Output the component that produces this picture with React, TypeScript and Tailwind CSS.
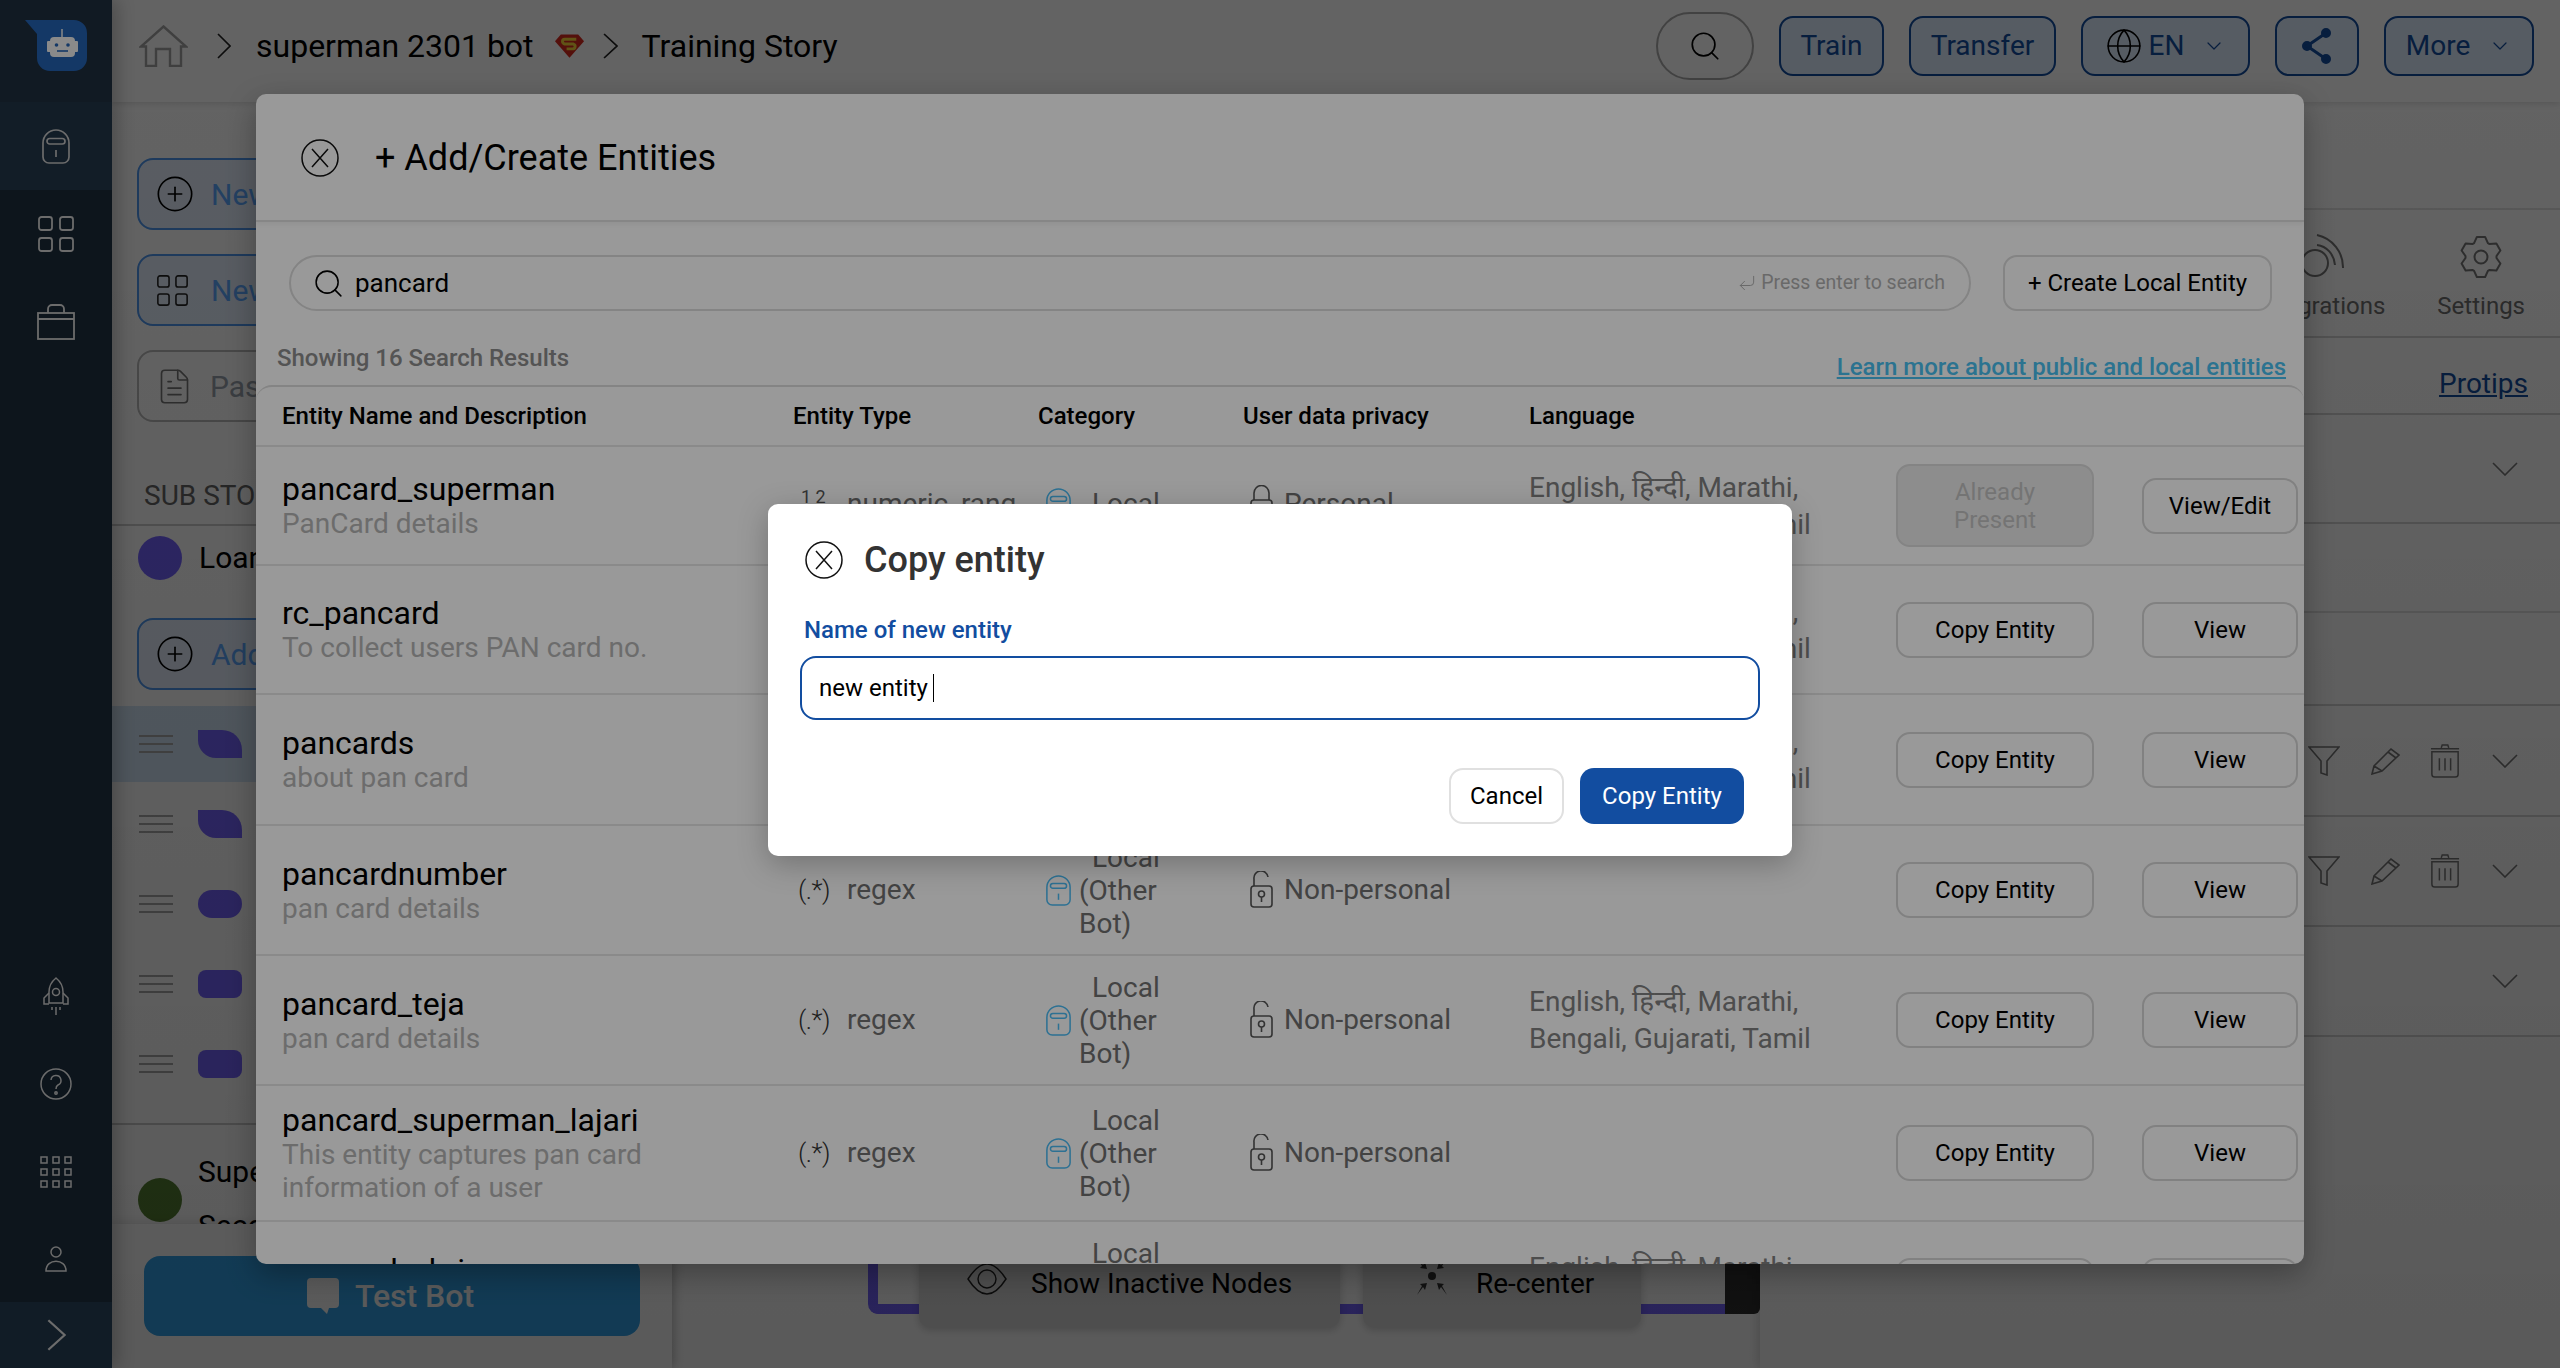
import React from "react";
import { ChevronDown, Search, Globe, CirclePlus, FileText, CornerDownLeft } from "lucide-react";

const Capsule = ({ className = "", w = 25, h = 31 }: { className?: string; w?: number; h?: number }) => (
  <svg width={w} height={h} viewBox="0 0 28 35" preserveAspectRatio="none" fill="none" stroke="currentColor" strokeWidth="1.7" className={className}>
    <path d="M1 14a13 13 0 0 1 26 0v14a6 6 0 0 1-6 6H7a6 6 0 0 1-6-6z" />
    <rect x="5" y="9.5" width="18" height="5.5" rx="2.7" />
    <path d="M14 21v7" />
  </svg>
);

const Squares = ({ size = 36 }: { size?: number }) => (
  <svg width={size} height={size} viewBox="0 0 36 36" fill="none" stroke="currentColor" strokeWidth="1.8">
    <rect x="1" y="1" width="13" height="13" rx="2.5" />
    <rect x="22" y="1" width="13" height="13" rx="2.5" />
    <rect x="1" y="22" width="13" height="13" rx="2.5" />
    <rect x="22" y="22" width="13" height="13" rx="2.5" />
  </svg>
);

const Grid9 = () => (
  <svg width="32" height="32" viewBox="0 0 32 32" fill="none" stroke="currentColor" strokeWidth="1.5">
    {[1, 13, 25].map((y) => [1, 13, 25].map((x) => <rect key={`${x}-${y}`} x={x} y={y} width="6" height="6" />))}
  </svg>
);

const CloseCircle = ({ size = 38 }: { size?: number }) => (
  <svg width={size} height={size} viewBox="0 0 38 38" fill="none" stroke="#111" strokeWidth="1.5" className="shrink-0">
    <circle cx="19" cy="19" r="18" />
    <path d="M11 10l16 18M27 10L11 28" />
  </svg>
);

const ChevR = ({ w = 14, h = 26, color = "#222" }: { w?: number; h?: number; color?: string }) => (
  <svg width={w} height={h} viewBox="0 0 14 26" preserveAspectRatio="none" fill="none" stroke={color} strokeWidth="1.6" className="shrink-0">
    <path d="M1 1l12 12L1 25" />
  </svg>
);

const ChevD = () => (
  <svg width="26" height="14" viewBox="0 0 26 14" fill="none" stroke="#777" strokeWidth="1.6" className="shrink-0">
    <path d="M1 1l12 12L25 1" />
  </svg>
);

const Lock = ({ closed }: { closed?: boolean }) => (
  <svg width="26" height="38" viewBox="0 0 26 38" fill="none" stroke="currentColor" strokeWidth="1.6" className="shrink-0">
    <path d={closed ? "M5 15V8a7.5 7.5 0 0 1 15 0v7" : "M5 15V8a7 7 0 0 1 14-2"} />
    <rect x="2" y="15" width="21" height="21" rx="3" />
    <circle cx="12.5" cy="23" r="3" />
    <path d="M12.5 26v5" />
  </svg>
);

const Trash = () => (
  <svg width="30" height="34" viewBox="0 0 32 36" fill="none" stroke="#777" strokeWidth="1.6" className="shrink-0">
    <path d="M1 5h30M12 4l1-3h6l1 3M2 8h28v24a3 3 0 0 1-3 3H5a3 3 0 0 1-3-3z" />
    <path d="M10 15v13M16 15v13M22 15v13" />
  </svg>
);

const FunnelIcon = () => (
  <svg width="32" height="30" viewBox="0 0 32 30" fill="none" stroke="#777" strokeWidth="1.6" className="shrink-0">
    <path d="M1 1h30L19 15v14l-6-2V15z" />
  </svg>
);

const PencilIcon = () => (
  <svg width="29" height="28" viewBox="0 0 29 28" fill="none" stroke="#777" strokeWidth="1.6" className="shrink-0">
    <path d="M1 27l2-8L20 2l8 6-17 16zM3 19l8 5M17 5l8 6" />
  </svg>
);

const HomeIcon = () => (
  <svg width="49" height="42" viewBox="0 0 49 42" fill="none" stroke="#a4a4a4" strokeWidth="2.4" className="shrink-0">
    <path d="M24.5 1.5L47 21.5h-5V41H31V24H17v17H7V21.5H2z" />
  </svg>
);

const gearPath = (() => {
  const pts: string[] = [];
  const cx = 22;
  const cy = 22;
  for (let i = 0; i < 6; i++) {
    const a = (i * Math.PI) / 3 - Math.PI / 2;
    const p = (r: number, d: number) => `${(cx + r * Math.cos(a + d)).toFixed(1)} ${(cy + r * Math.sin(a + d)).toFixed(1)}`;
    pts.push(p(15.5, -0.46), p(20.5, -0.2), p(20.5, 0.2), p(15.5, 0.46));
  }
  return `M${pts.join("L")}Z`;
})();

const GearIcon = () => (
  <svg width="44" height="46" viewBox="0 0 44 44" fill="none" stroke="#777" strokeWidth="2" strokeLinejoin="round">
    <path d={gearPath} />
    <circle cx="22" cy="22" r="6.5" />
  </svg>
);

const DragLines = () => (
  <svg width="34" height="18" viewBox="0 0 34 18" fill="none" stroke="#aaaaaa" strokeWidth="2" className="shrink-0">
    <path d="M0 1h34M0 9h34M0 17h34" />
  </svg>
);

const Logo = () => (
  <svg width="62" height="51" viewBox="0 0 62 51">
    <path d="M0 0h49a13 13 0 0 1 13 13v25a13 13 0 0 1-13 13H25a13 13 0 0 1-13-13V14z" fill="#143866" />
    <path d="M37 9v9" stroke="#8a8a8a" strokeWidth="1.5" />
    <rect x="25" y="17" width="25" height="20" rx="4" fill="#8a8a8a" />
    <rect x="22" y="21" width="4" height="11" rx="1" fill="#8a8a8a" />
    <rect x="49" y="21" width="4" height="11" rx="1" fill="#8a8a8a" />
    <circle cx="31.5" cy="25" r="1.8" fill="#143866" />
    <circle cx="43" cy="25" r="1.8" fill="#143866" />
    <path d="M32 31h11" stroke="#143866" strokeWidth="1.6" />
  </svg>
);

const Rocket = () => (
  <svg width="28" height="40" viewBox="0 0 28 40" fill="none" stroke="currentColor" strokeWidth="1.5">
    <path d="M14 1c5 4 7 9 7 14v11H7V15c0-5 2-10 7-14z" />
    <circle cx="14" cy="15" r="3.5" />
    <path d="M7 16l-5 5v6h5M21 16l5 5v6h-5M10 30v3M14 30v8M18 30v3" />
  </svg>
);

const Superman = () => (
  <svg width="31" height="26" viewBox="0 0 32 26" className="shrink-0">
    <path d="M7 1h18l6 7-15 17L1 8z" fill="#d92b1f" />
    <path d="M23 6H11c-3 0-3 4 0 5h9c3 1 2 5-1 5h-6" fill="none" stroke="#f8d73a" strokeWidth="3" />
  </svg>
);

const TopBtn = ({ children, className = "" }: { children: React.ReactNode; className?: string }) => (
  <div className={`flex h-[60px] items-center justify-center rounded-[14px] border-2 border-[#124da0] bg-[#deecff] text-[28px] text-[#124da0] ${className}`}>{children}</div>
);

const SideBtn = ({ icon, label, muted }: { icon: React.ReactNode; label: string; muted?: boolean }) => (
  <div className={`flex h-[72px] w-[504px] items-center gap-[16px] rounded-[16px] border-2 pl-[16px] text-[30px] ${muted ? "border-[#bbbbbb] bg-white text-[#9aa3ad]" : "border-[#4f98f0] bg-[#e6f0ff] text-[#5ca8ff]"}`}>
    {icon}
    <span>{label}</span>
  </div>
);

const DragRow = ({ shape, active }: { shape: string; active?: boolean }) => (
  <div className="flex h-[80px] shrink-0 items-center">
    <div className={`flex h-[76px] w-full items-center gap-[25px] pl-[27px] ${active ? "bg-[#d4e6f8]" : ""}`}>
      <DragLines />
      <div className={`h-[28px] w-[44px] bg-[#7564ff] ${shape}`} />
    </div>
  </div>
);

const RightRow = ({ h, icons }: { h: string; icons?: boolean }) => (
  <div className={`flex items-center justify-end border-b-2 border-[#d4d4d4] pr-[42px] ${h}`}>
    {icons && (
      <>
        <FunnelIcon />
        <span className="ml-[31px] flex"><PencilIcon /></span>
        <span className="ml-[30px] flex"><Trash /></span>
      </>
    )}
    <span className="ml-[32px] flex"><ChevD /></span>
  </div>
);

type Row = {
  name: string;
  desc: string[];
  h: string;
  numeric?: boolean;
  short?: boolean;
  personal?: boolean;
  lang?: boolean;
  already?: boolean;
};

const rows: Row[] = [
  { name: "pancard_superman", desc: ["PanCard details"], h: "h-[119px]", numeric: true, short: true, personal: true, lang: true, already: true },
  { name: "rc_pancard", desc: ["To collect users PAN card no."], h: "h-[129px]", lang: true },
  { name: "pancards", desc: ["about pan card"], h: "h-[131px]", lang: true },
  { name: "pancardnumber", desc: ["pan card details"], h: "h-[130px]" },
  { name: "pancard_teja", desc: ["pan card details"], h: "h-[130px]", lang: true },
  { name: "pancard_superman_lajari", desc: ["This entity captures pan card", "information of a user"], h: "h-[136px]" },
  { name: "pancard_shriram", desc: ["pan card details"], h: "h-[130px]", lang: true },
];

const EntityRow = ({ r }: { r: Row }) => (
  <div className={`flex shrink-0 items-center border-b-2 border-[#e6e6e6] ${r.h}`}>
    <div className="w-[537px] shrink-0 pl-[26px]">
      <div className="text-[32px] leading-[36px] text-black">{r.name}</div>
      {r.desc.map((d) => (
        <div key={d} className="text-[28px] leading-[33px] text-[#b5b5b5]">{d}</div>
      ))}
    </div>
    <div className={`flex w-[245px] shrink-0 items-center text-[28px] text-[#707070] ${r.short ? "mb-[4px]" : ""}`}>
      {r.numeric ? (
        <span className="w-[54px] pb-[14px] pl-[8px] text-[18px] leading-[20px] text-[#555]">1 2</span>
      ) : (
        <span className="w-[54px] pl-[5px] text-[26px] font-light tracking-[-0.5px] text-[#333]">(.*)</span>
      )}
      <span>{r.numeric ? "numeric_rang" : "regex"}</span>
    </div>
    <div className={`flex w-[205px] shrink-0 items-center text-[28px] leading-[33px] text-[#707070] ${r.short ? "mb-[4px]" : ""}`}>
      <Capsule className="ml-[8px] shrink-0 text-[#4bbcf5]" />
      <div className="ml-[8px] w-[110px] indent-[13px]">{r.short ? "Local" : "Local (Other Bot)"}</div>
    </div>
    <div className={`flex w-[286px] shrink-0 items-center gap-[9px] text-[28px] text-[#707070] ${r.short ? "mb-[4px]" : ""}`}>
      <span className="ml-[6px] flex text-[#555]"><Lock closed={r.personal} /></span>
      <span>{r.personal ? "Personal" : "Non-personal"}</span>
    </div>
    <div className="w-[367px] shrink-0 text-[28px] leading-[37px] text-[#808080]">
      {r.lang && (
        <>
          <div>English, हिन्दी, Marathi,</div>
          <div>Bengali, Gujarati, Tamil</div>
        </>
      )}
    </div>
    <div className="flex items-center gap-[48px] text-[24px]">
      {r.already ? (
        <div className="flex h-[83px] w-[198px] items-center justify-center rounded-[14px] border-2 border-[#dcdcdc] bg-[#ececec] text-center leading-[28px] text-[#c2c2c2]">
          Already<br />Present
        </div>
      ) : (
        <div className="flex h-[56px] w-[198px] items-center justify-center rounded-[14px] border-2 border-[#d8d8d8] text-black">Copy Entity</div>
      )}
      <div className="flex h-[56px] w-[156px] items-center justify-center rounded-[14px] border-2 border-[#d8d8d8] text-black">
        {r.already ? "View/Edit" : "View"}
      </div>
    </div>
  </div>
);

export default function App() {
  return (
    <div className="relative flex h-[1368px] w-[2560px] overflow-hidden bg-white font-['Roboto','Noto_Sans',sans-serif] text-black">
      {/* Sidebar */}
      <aside className="relative z-40 flex h-full w-[112px] shrink-0 flex-col items-center bg-[#0d151c] text-[#6c6c6c] shadow-[6px_0_16px_rgba(0,0,0,0.22)]">
        <div className="flex h-[102px] w-full shrink-0 items-start justify-center bg-[#111a23] pt-[20px]"><Logo /></div>
        <div className="flex h-[88px] w-full shrink-0 items-center justify-center bg-[#121d27]"><Capsule w={28} h={35} /></div>
        <div className="mt-[26px]"><Squares /></div>
        <div className="mt-[52px]">
          <svg width="38" height="36" viewBox="0 0 38 36" fill="none" stroke="currentColor" strokeWidth="1.8">
            <rect x="1" y="9" width="36" height="26" />
            <path d="M1 15h36M11 9V5a4 4 0 0 1 4-4h8a4 4 0 0 1 4 4v4" />
          </svg>
        </div>
        <div className="mt-[637px]"><Rocket /></div>
        <div className="mt-[51px] flex"><svg width="32" height="32" viewBox="0 0 32 32" fill="none" stroke="currentColor" strokeWidth="1.5"><circle cx="16" cy="16" r="15" /><path d="M11 12a5 5 0 1 1 7 5c-2 1-2 2-2 4" /><circle cx="16" cy="25" r="1.2" /></svg></div>
        <div className="mt-[56px] flex"><Grid9 /></div>
        <div className="mt-[58px] flex"><svg width="24" height="26" viewBox="0 0 24 26" fill="none" stroke="currentColor" strokeWidth="1.5"><circle cx="12" cy="6" r="5" /><path d="M2 25c0-13 20-13 20 0z" /></svg></div>
        <div className="mt-[30px] flex w-full flex-1 items-center justify-center bg-[#111c26]"><ChevR w={19} h={32} color="#6c6c6c" /></div>
      </aside>

      <div className="flex min-w-0 flex-1 flex-col">
        {/* Top bar */}
        <header className="z-10 flex h-[102px] shrink-0 items-center bg-white pb-[10px] pl-[27px] pr-[26px] shadow-[0_2px_6px_rgba(0,0,0,0.12)]">
          <HomeIcon />
          <span className="ml-[29px] flex"><ChevR /></span>
          <span className="ml-[25px] text-[32px] text-black">superman 2301 bot</span>
          <span className="ml-[20px] flex"><Superman /></span>
          <span className="ml-[18px] flex"><ChevR w={15} /></span>
          <span className="ml-[24px] text-[32px] text-black">Training Story</span>
          <div className="ml-auto flex items-center gap-[25px]">
            <div className="flex h-[68px] w-[98px] items-center justify-center rounded-full border-2 border-[#aaaaaa]"><Search size={34} strokeWidth={1.2} /></div>
            <TopBtn className="w-[105px]">Train</TopBtn>
            <TopBtn className="w-[147px]">Transfer</TopBtn>
            <TopBtn className="w-[169px] gap-[6px]"><Globe size={38} strokeWidth={1} className="text-black" />EN<ChevronDown size={24} strokeWidth={1.2} className="ml-[12px]" /></TopBtn>
            <TopBtn className="w-[84px]">
              <svg width="30" height="36" viewBox="0 0 30 36" fill="#124da0" stroke="#124da0" strokeWidth="3"><circle cx="24" cy="5" r="3.5" /><circle cx="5" cy="18" r="3.5" /><circle cx="24" cy="31" r="3.5" /><path d="M24 5L5 18l19 13" fill="none" /></svg>
            </TopBtn>
            <TopBtn className="w-[150px] gap-[18px]">More<ChevronDown size={24} strokeWidth={1.2} /></TopBtn>
          </div>
        </header>

        <div className="flex min-h-0 flex-1">
          {/* Left story panel */}
          <section className="relative z-[5] flex w-[560px] shrink-0 flex-col shadow-[3px_0_10px_rgba(0,0,0,0.18)]">
            <div className="flex flex-col gap-[24px] pl-[25px] pt-[56px]">
              <SideBtn icon={<CirclePlus size={40} strokeWidth={1} className="text-black" />} label="New Story" />
              <SideBtn icon={<span className="ml-[2px] mr-[7px] flex text-[#222]"><Squares size={31} /></span>} label="New Flow" />
              <SideBtn icon={<FileText size={39} strokeWidth={1} className="text-[#777]" />} label="Paste" muted />
            </div>
            <div className="mt-[60px] h-[44px] border-b-2 border-[#cccccc] pl-[32px] text-[28px] leading-[28px] text-[#666]">SUB STORIES</div>
            <div className="mt-[9px] flex items-center gap-[17px] pl-[26px] text-[30px]">
              <div className="h-[44px] w-[44px] rounded-full bg-[#7564ff]" />
              <span>Loan</span>
            </div>
            <div className="mt-[38px] pl-[25px]">
              <SideBtn icon={<CirclePlus size={40} strokeWidth={1} className="text-black" />} label="Add" />
            </div>
            <div className="mt-[14px] flex flex-col border-b-2 border-[#cccccc] pb-[19px]">
              <DragRow active shape="rounded-tr-[20px] rounded-bl-[18px]" />
              <DragRow shape="rounded-tr-[20px] rounded-bl-[18px]" />
              <DragRow shape="rounded-full" />
              <DragRow shape="rounded-[8px]" />
              <DragRow shape="rounded-[8px]" />
            </div>
            <div className="flex flex-1 items-start gap-[16px] overflow-hidden pl-[26px] pt-[30px] text-[30px]">
              <div className="mt-[23px] h-[44px] w-[44px] shrink-0 rounded-full bg-[#568032]" />
              <div className="flex flex-col gap-[20px] leading-[34px]"><span>Super</span><span>Second</span></div>
            </div>
            <div className="flex h-[144px] shrink-0 items-start bg-white pl-[32px] pt-[32px] shadow-[0_-3px_8px_rgba(0,0,0,0.1)]">
              <div className="flex h-[80px] w-[496px] items-center justify-center gap-[16px] rounded-[16px] bg-[#33a5ec] text-[32px] font-medium text-white">
                <svg width="32" height="36" viewBox="0 0 32 36" fill="currentColor" className="-ml-[3px]"><path d="M4 0h24a4 4 0 0 1 4 4v22a4 4 0 0 1-4 4h-6l-2 6-6-6H4a4 4 0 0 1-4-4V4a4 4 0 0 1 4-4z" /></svg>
                Test Bot
              </div>
            </div>
          </section>

          {/* Canvas */}
          <section className="relative min-w-0 flex-1">
            <div className="absolute left-[196px] top-[1100px] h-[112px] w-[892px] rounded-b-[10px] border-b-[10px] border-l-[10px] border-[#7564ff]" />
            <div className="absolute left-[1053px] top-[1100px] h-[112px] w-[35px] rounded-br-[6px] bg-[#303030]" />
            <div className="absolute left-[247px] top-[1120px] flex h-[105px] w-[421px] items-start gap-[24px] rounded-[10px] bg-[#dcdcdc] pl-[48px] pt-[41px] text-[28px] shadow-[0_3px_8px_rgba(0,0,0,0.2)]">
              <svg width="40" height="32" viewBox="0 0 40 32" fill="none" stroke="#222" strokeWidth="1.4"><path d="M1 16C8 5 14 1 20 1s12 4 19 15c-7 11-13 15-19 15S8 27 1 16z" /><circle cx="20" cy="16" r="9" /></svg>
              Show Inactive Nodes
            </div>
            <div className="absolute left-[691px] top-[1120px] flex h-[105px] w-[278px] items-start gap-[23px] rounded-[10px] bg-[#dcdcdc] pl-[48px] pt-[41px] text-[28px] shadow-[0_3px_8px_rgba(0,0,0,0.2)]">
              <svg width="42" height="38" viewBox="0 0 42 38" fill="#333" className="-mt-[6px]"><circle cx="21" cy="19" r="4" /><path d="M6 0l6 8 2-3 2 7-7-1 2-2zM36 0l-6 8-2-3-2 7 7-1-2-2zM6 38l6-8 2 3 2-7-7 1 2 2zM36 38l-6-8-2 3-2-7 7 1-2 2z" /></svg>
              Re-center
            </div>
          </section>

          {/* Right panel */}
          <section className="z-[5] flex w-[800px] shrink-0 flex-col shadow-[-3px_0_10px_rgba(0,0,0,0.15)]">
            <div className="h-[108px] border-b-2 border-[#e4e4e4]" />
            <div className="flex h-[128px] items-center justify-end gap-[52px] border-b-2 border-[#d4d4d4] pr-[35px] pt-[12px] text-[24px] text-[#707070]">
              <div className="flex flex-col items-center gap-[8px]">
                <svg width="60" height="46" viewBox="0 0 60 46" fill="none" stroke="#777" strokeWidth="2"><circle cx="23" cy="29" r="13" /><path d="M25 1a33 33 0 0 1 26 33M25 11a20 22 0 0 1 18 20" /></svg>
                <span>Integrations</span>
              </div>
              <div className="flex flex-col items-center gap-[8px]">
                <GearIcon />
                <span>Settings</span>
              </div>
            </div>
            <div className="flex h-[77px] items-center justify-end border-b-2 border-[#d4d4d4] pr-[32px] pt-[16px] text-[28px] text-[#124da0] underline">Protips</div>
            <RightRow h="h-[109px]" />
            <div className="h-[89px] border-b-2 border-[#e0e0e0]" />
            <div className="h-[93px] border-b-2 border-[#d4d4d4]" />
            <RightRow h="h-[111px]" icons />
            <RightRow h="h-[110px]" icons />
            <RightRow h="h-[110px]" />
          </section>
        </div>
      </div>

      {/* First dialog */}
      <div className="absolute inset-0 z-20 flex justify-center bg-gradient-to-b from-black/35 to-black/41 pt-[94px]">
        <div className="flex h-[1170px] w-[2048px] flex-col overflow-hidden rounded-[10px] bg-white shadow-[0_10px_30px_rgba(0,0,0,0.3)]">
          <div className="flex h-[128px] shrink-0 items-center gap-[36px] border-b-2 border-[#e0e0e0] pl-[45px] pt-[2px] shadow-[0_2px_5px_rgba(0,0,0,0.06)]">
            <CloseCircle />
            <span className="text-[36px] text-black">+ Add/Create Entities</span>
          </div>
          <div className="mt-[33px] flex shrink-0 items-center pl-[33px]">
            <div className="flex h-[56px] w-[1682px] items-center rounded-full border-2 border-[#dcdcdc] pl-[22px] pr-[24px]">
              <Search size={33} strokeWidth={1.1} className="-ml-[1px] text-black" />
              <span className="ml-[10px] text-[26px] text-black">pancard</span>
              <span className="ml-auto flex items-center gap-[4px] text-[19.5px] text-[#b0b0b0]"><CornerDownLeft size={20} strokeWidth={1.2} />Press enter to search</span>
            </div>
            <div className="ml-[32px] flex h-[56px] w-[269px] items-center justify-center rounded-[14px] border-2 border-[#dcdcdc] text-[24px] text-black">+ Create Local Entity</div>
          </div>
          <div className="flex h-[74px] shrink-0 items-center justify-between pl-[21px] pr-[18px] pt-[20px]">
            <span className="text-[24px] font-medium leading-[28px] text-[#8c8c8c]">Showing 16 Search Results</span>
            <span className="pt-[18px] text-[24px] font-medium leading-[28px] text-[#48c0f0] underline">Learn more about public and local entities</span>
          </div>
          <div className="flex min-h-0 flex-1 flex-col overflow-hidden rounded-t-[16px] border-t-2 border-[#dcdcdc]">
            <div className="flex h-[60px] shrink-0 items-center border-b-2 border-[#e6e6e6] text-[24px] font-medium">
              <div className="w-[537px] shrink-0 pl-[26px]">Entity Name and Description</div>
              <div className="w-[245px] shrink-0">Entity Type</div>
              <div className="w-[205px] shrink-0">Category</div>
              <div className="w-[286px] shrink-0">User data privacy</div>
              <div>Language</div>
            </div>
            {rows.map((r) => (
              <EntityRow key={r.name} r={r} />
            ))}
          </div>
        </div>
      </div>

      {/* Copy dialog */}
      <div className="absolute inset-0 z-30 flex justify-center bg-black/40 pt-[504px]">
        <div className="h-[352px] w-[1024px] rounded-[10px] bg-white pl-[32px] pr-[32px] shadow-[0_8px_30px_rgba(0,0,0,0.25)]">
          <div className="flex h-[110px] items-center gap-[21px] pl-[5px] pt-[2px]">
            <CloseCircle />
            <span className="text-[36px] font-medium text-[#333]">Copy entity</span>
          </div>
          <div className="pl-[4px] text-[24px] font-medium leading-[32px] text-[#124da0]">Name of new entity</div>
          <div className="mt-[10px] flex h-[64px] w-[960px] items-center rounded-[16px] border-2 border-[#124da0] pl-[17px] text-[24px] text-black">
            new entity<span className="ml-[5px] h-[28px] w-[1px] bg-black" />
          </div>
          <div className="mt-[48px] flex justify-end gap-[16px] pr-[16px] text-[24px]">
            <div className="flex h-[56px] w-[115px] items-center justify-center rounded-[14px] border-2 border-[#e0e0e0] text-black">Cancel</div>
            <div className="flex h-[56px] w-[164px] items-center justify-center rounded-[14px] bg-[#124da0] text-white">Copy Entity</div>
          </div>
        </div>
      </div>
    </div>
  );
}
